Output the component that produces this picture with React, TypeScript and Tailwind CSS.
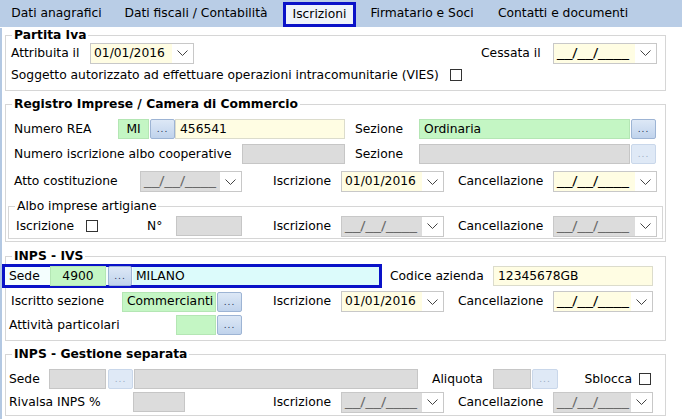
import React from 'react';

type Tone = 'yellow' | 'green' | 'gray' | 'cyan';

const toneClass: Record<Tone, string> = {
  yellow: 'bg-[#fffde3] border-[#dcdccc]',
  green: 'bg-[#c4f6c4] border-[#b4e6b4]',
  gray: 'bg-[#dcdcdc] border-[#c6c6c6]',
  cyan: 'bg-[#dcfbfb] border-[#dcfbfb]',
};

function Field({
  w,
  tone,
  children,
  center,
  className = '',
}: {
  w: string;
  tone: Tone;
  children?: React.ReactNode;
  center?: boolean;
  className?: string;
}) {
  return (
    <div
      className={`h-[20px] shrink-0 border flex items-center ${center ? 'justify-center' : 'pl-[4px]'} ${toneClass[tone]} ${w} ${className}`}
    >
      {children}
    </div>
  );
}

function Chevron() {
  return (
    <svg width="11" height="6" viewBox="0 0 11 6" fill="none">
      <polyline points="0.5,0.5 5.5,5.5 10.5,0.5" stroke="#444" strokeWidth="1" />
    </svg>
  );
}

function DateBox({ w, tone, value }: { w: string; tone: 'yellow' | 'gray'; value?: string }) {
  return (
    <div className={`h-[21px] shrink-0 flex border border-[#c8c8c8] bg-white ${w}`}>
      <div
        className={`flex-1 flex items-center pl-[3px] overflow-hidden ${tone === 'yellow' ? 'bg-[#fffde3] text-black' : 'bg-[#dcdcdc] text-[#6a6a6a]'}`}
      >
        {value ? (
          value
        ) : (
          <span className="inline-block origin-left scale-x-[1.25] whitespace-nowrap">__/__/____</span>
        )}
      </div>
      <div className="w-[21px] flex items-center justify-center">
        <Chevron />
      </div>
    </div>
  );
}

function Dots({ disabled, w = 'w-[25px]', className = '' }: { disabled?: boolean; w?: string; className?: string }) {
  return (
    <div
      className={`h-[20px] shrink-0 rounded-[2px] border flex items-end justify-center pb-[4px] text-[9px] leading-none tracking-[1px] ${
        disabled
          ? 'border-[#c9d7ea] bg-[#dfe9f6] text-[#9aabc2]'
          : 'border-[#9db4d4] bg-linear-to-b from-[#dde8f6] to-[#c0d3ec] text-[#1d2f55]'
      } ${w} ${className}`}
    >
      ...
    </div>
  );
}

function Check({ className = '' }: { className?: string }) {
  return <div className={`w-[12px] h-[12px] shrink-0 border border-[#333] bg-white ${className}`} />;
}

function Group({
  title,
  bold = true,
  className = '',
  children,
}: {
  title: string;
  bold?: boolean;
  className?: string;
  children: React.ReactNode;
}) {
  return (
    <fieldset className={`border border-[#d6d6d6] ${className}`}>
      <legend className={`ml-[6px] px-[2px] leading-[14px] ${bold ? 'font-bold' : ''}`}>{title}</legend>
      {children}
    </fieldset>
  );
}

const tabs = [
  { label: 'Dati anagrafici', w: 'w-[113px]' },
  { label: 'Dati fiscali / Contabilità', w: 'w-[166px]' },
];
const tabsAfter = [
  { label: 'Firmatario e Soci', w: 'w-[132px]' },
  { label: 'Contatti e documenti', w: 'w-[150px]' },
];

export default function App() {
  return (
    <div className="w-[682px] h-[419px] overflow-hidden bg-white text-[12.3px] text-black font-['DejaVu_Sans',sans-serif]">
      {/* Tab bar */}
      <div className="h-[27px] bg-[#b9cde6] flex items-end">
        {tabs.map((t) => (
          <div key={t.label} className={`h-[27px] flex items-center justify-center ${t.w}`}>
            {t.label}
          </div>
        ))}
        <div className="ml-[4px] w-[73px] h-[25px] border-[3px] border-[#0a12c8] bg-[#eef3fa] flex items-center justify-center">
          Iscrizioni
        </div>
        {tabsAfter.map((t) => (
          <div key={t.label} className={`h-[27px] flex items-center justify-center ${t.w}`}>
            {t.label}
          </div>
        ))}
      </div>

      <div className="border-l-2 border-[#b3c8e2] h-[392px]">
        {/* Partita Iva */}
        <Group title="Partita Iva" className="ml-[3px] w-[661px] mt-[1px] pb-[4px]">
          <div className="flex items-center h-[22px]">
            <div className="w-[84px] pl-[5px] shrink-0">Attribuita il</div>
            <DateBox w="w-[104px]" tone="yellow" value="01/01/2016" />
            <div className="w-[287px] shrink-0" />
            <div className="w-[72px] shrink-0">Cessata il</div>
            <DateBox w="w-[104px]" tone="yellow" />
          </div>
          <div className="flex items-center h-[22px] pl-[5px]">
            <span>Soggetto autorizzato ad effettuare operazioni intracomunitarie (VIES)</span>
            <Check className="ml-[11px]" />
          </div>
        </Group>

        {/* Registro Imprese */}
        <Group title="Registro Imprese / Camera di Commercio" className="ml-[3px] w-[661px] mt-[6px] pb-[2px]">
          <div className="flex items-center h-[20px] mt-[8px]">
            <div className="w-[112px] pl-[8px] shrink-0">Numero REA</div>
            <Field w="w-[31px]" tone="green" center>
              MI
            </Field>
            <Dots className="ml-[1px]" />
            <Field w="w-[170px]" tone="yellow">
              456541
            </Field>
            <div className="w-[74px] pl-[10px] shrink-0">Sezione</div>
            <Field w="w-[211px]" tone="green">
              Ordinaria
            </Field>
            <Dots className="ml-[1px]" />
          </div>
          <div className="flex items-center h-[20px] mt-[5px]">
            <div className="w-[236px] pl-[8px] shrink-0">Numero iscrizione albo cooperative</div>
            <Field w="w-[103px]" tone="gray" />
            <div className="w-[74px] pl-[10px] shrink-0">Sezione</div>
            <Field w="w-[211px]" tone="gray" />
            <Dots disabled className="ml-[1px]" />
          </div>
          <div className="flex items-center h-[21px] mt-[7px]">
            <div className="w-[134px] pl-[8px] shrink-0">Atto costituzione</div>
            <DateBox w="w-[102px]" tone="gray" />
            <div className="w-[99px] pl-[31px] shrink-0">Iscrizione</div>
            <DateBox w="w-[103px]" tone="yellow" value="01/01/2016" />
            <div className="w-[109px] pl-[14px] shrink-0">Cancellazione</div>
            <DateBox w="w-[104px]" tone="yellow" />
          </div>
          <Group title="Albo imprese artigiane" bold={false} className="mx-[2px] mt-[7px] pb-[2px]">
            <div className="flex items-center h-[20px] mt-[3px]">
              <div className="w-[77px] pl-[7px] shrink-0">Iscrizione</div>
              <Check />
              <div className="w-[49px] shrink-0" />
              <div className="w-[29px] shrink-0">N°</div>
              <Field w="w-[66px]" tone="gray" />
              <div className="w-[99px] pl-[31px] shrink-0">Iscrizione</div>
              <DateBox w="w-[103px]" tone="gray" />
              <div className="w-[109px] pl-[14px] shrink-0">Cancellazione</div>
              <DateBox w="w-[104px]" tone="gray" />
            </div>
          </Group>
        </Group>

        {/* INPS - IVS */}
        <Group title="INPS - IVS" className="ml-[3px] w-[661px] mt-[7px] pb-[5px]">
          <div className="flex items-center h-[24px] mt-[1px]">
            <div className="ml-[-4px] w-[380px] h-[24px] shrink-0 border-[3px] border-[#0a12c8] bg-[#f4fefe] flex items-center">
              <div className="w-[45px] pl-[4px] shrink-0">Sede</div>
              <Field w="w-[56px]" tone="green" center className="h-[18px]">
                4900
              </Field>
              <Dots w="w-[24px]" className="ml-[2px] h-[18px]" />
              <div className="ml-[1px] flex-1 h-[18px] bg-[#dcfbfb] flex items-center pl-[3px]">MILANO</div>
            </div>
            <div className="w-[111px] pl-[8px] shrink-0">Codice azienda</div>
            <Field w="w-[160px]" tone="yellow">
              12345678GB
            </Field>
          </div>
          <div className="flex items-center h-[21px] mt-[3px]">
            <div className="w-[116px] pl-[5px] shrink-0">Iscritto sezione</div>
            <Field w="w-[94px]" tone="green" className="pl-[3px]">
              Commercianti
            </Field>
            <Dots className="ml-[1px]" />
            <div className="w-[99px] pl-[31px] shrink-0">Iscrizione</div>
            <DateBox w="w-[103px]" tone="yellow" value="01/01/2016" />
            <div className="w-[109px] pl-[14px] shrink-0">Cancellazione</div>
            <DateBox w="w-[100px]" tone="yellow" />
          </div>
          <div className="flex items-center h-[20px] mt-[3px]">
            <div className="w-[170px] pl-[3px] shrink-0">Attività particolari</div>
            <Field w="w-[40px]" tone="green" />
            <Dots className="ml-[1px]" />
          </div>
        </Group>

        {/* INPS - Gestione separata */}
        <Group title="INPS - Gestione separata" className="ml-[3px] w-[661px] mt-[6px] pb-[3px]">
          <div className="flex items-center h-[20px] mt-[8px]">
            <div className="w-[43px] pl-[3px] shrink-0">Sede</div>
            <Field w="w-[57px]" tone="gray" />
            <Dots disabled className="ml-[2px]" />
            <Field w="w-[284px]" tone="gray" className="ml-[1px]" />
            <div className="w-[75px] pl-[14px] shrink-0">Aliquota</div>
            <Field w="w-[38px]" tone="gray" />
            <Dots disabled w="w-[26px]" className="ml-[1px]" />
            <div className="w-[81px] pr-[7px] text-right shrink-0">Sblocca</div>
            <Check />
          </div>
          <div className="flex items-center h-[20px] mt-[3px]">
            <div className="w-[127px] pl-[3px] shrink-0">Rivalsa INPS %</div>
            <Field w="w-[52px]" tone="gray" />
            <div className="w-[57px] shrink-0" />
            <div className="w-[99px] pl-[31px] shrink-0">Iscrizione</div>
            <DateBox w="w-[103px]" tone="gray" />
            <div className="w-[109px] pl-[14px] shrink-0">Cancellazione</div>
            <DateBox w="w-[100px]" tone="gray" />
          </div>
        </Group>
      </div>
    </div>
  );
}
